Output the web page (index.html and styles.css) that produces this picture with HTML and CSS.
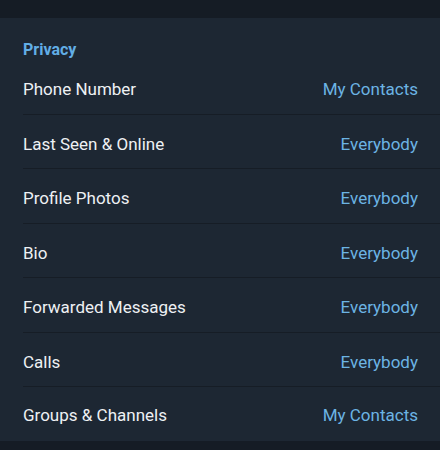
FILE: index.html
```html
<!DOCTYPE html>
<html>
<head>
<meta charset="utf-8">
<link rel="stylesheet" href="styles.css">
</head>
<body>
<div class="topbar"></div>
<section class="panel">
  <h2 class="header">Privacy</h2>
  <div class="row"><span class="label">Phone Number</span><span class="value">My Contacts</span></div>
  <div class="row"><span class="label">Last Seen &amp; Online</span><span class="value">Everybody</span></div>
  <div class="row"><span class="label">Profile Photos</span><span class="value">Everybody</span></div>
  <div class="row"><span class="label">Bio</span><span class="value">Everybody</span></div>
  <div class="row"><span class="label">Forwarded Messages</span><span class="value">Everybody</span></div>
  <div class="row"><span class="label">Calls</span><span class="value">Everybody</span></div>
  <div class="row last"><span class="label">Groups &amp; Channels</span><span class="value">My Contacts</span></div>
</section>
<div class="bottombar"></div>
</body>
</html>
```
FILE: styles.css
```css
html, body {
  margin: 0;
  padding: 0;
  background: #151c25;
  font-family: Roboto, "Liberation Sans", sans-serif;
}
.topbar {
  height: 18px;
  background: #151c25;
}
.panel {
  background: #1d2733;
  padding-left: 23px;
}
.header {
  margin: 0;
  height: 42px;
  box-sizing: border-box;
  padding-top: 23px;
  font-size: 16px;
  line-height: 18px;
  font-weight: 700;
  color: #62aee6;
}
.row {
  height: 54.5px;
  box-sizing: border-box;
  display: flex;
  align-items: center;
  justify-content: space-between;
  padding-right: 22px;
  padding-top: 5px;
  border-bottom: 1px solid #161d26;
}
.row.last {
  border-bottom: none;
  height: 54px;
  padding-top: 1px;
}
.label {
  font-size: 17px;
  color: #eef1f4;
}
.value {
  font-size: 17px;
  color: #6cb4e4;
}
.bottombar {
  height: 20px;
  background: #151c25;
}
```
